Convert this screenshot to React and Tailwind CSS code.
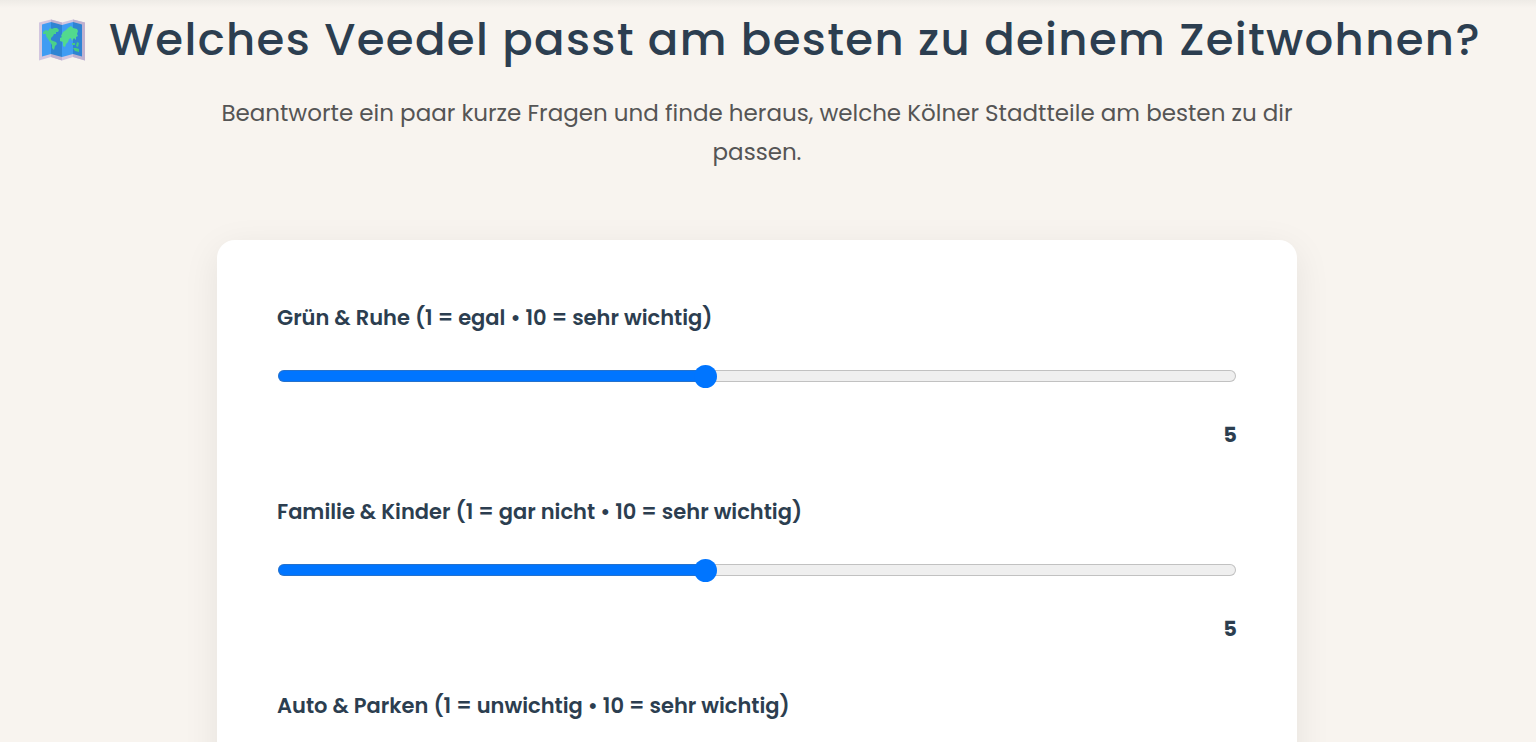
import React, { useState } from "react";

const QUESTIONS = [
  { id: "green", label: "Grün & Ruhe (1 = egal • 10 = sehr wichtig)" },
  { id: "family", label: "Familie & Kinder (1 = gar nicht • 10 = sehr wichtig)" },
  { id: "parking", label: "Auto & Parken (1 = unwichtig • 10 = sehr wichtig)" },
];

const MIN = 1;
const MAX = 10;
const THUMB = 23;

function MapIcon() {
  return (
    <svg viewBox="0 0 46 42" className="ml-1.5 w-[46px] h-[42px] shrink-0" aria-hidden="true">
      <path d="M0 3.500 12 0.500 23 3.500 34 0.500 46 3.500V41.500L34 38 23 41.500 12 38 0 41.500Z" fill="#d3c6df" />
      <path d="M12 0.500 23 3.500V41.500L12 38ZM34 0.500 46 3.500V41.500L34 38Z" fill="#bfb1d0" />
      <path d="M3 5.500 12 3V35L3 37.500Z" fill="#3f9cf3" />
      <path d="M12 3 23 6V38L12 35Z" fill="#2f84d3" />
      <path d="M23 6 34 3V35L23 38Z" fill="#3f9cf3" />
      <path d="M34 3 43 5.500V37.500L34 35Z" fill="#2f84d3" />
      <path
        d="M4 13 7 11 9 12 11 9 13 10 15 9 18 9 20 11 19 13 17 13 17 15 15 15 14 17 12 19 12 21 14 22 17 23 18 25 16 27 15 31 13 29 13 26 11 23 9 20 7 17 7 15 4 15Z"
        fill="#4bd189"
      />
      <path
        d="M22 17 24 13 27 11 29 9 32 7 34 9 38 10 39 12 38 15 39 17 37 18 37 21 35 19 33 22 32 19 30 20 29 23 27 25 26 28 24 27 24 23 21 22 21 19 23 18Z"
        fill="#52d98e"
      />
      <path d="M33 24 36 24 36 26 33 26ZM38 23 40 24 39 28 37 27ZM34 29 37 29 40 30 40 33 36 32Z" fill="#45ca83" />
    </svg>
  );
}

function SliderQuestion({ id, label }) {
  const [value, setValue] = useState(5);
  const ratio = (value - MIN) / (MAX - MIN);
  // the fill ends under the middle of the thumb
  const fill = `calc(${THUMB / 2}px + (100% - ${THUMB}px) * ${ratio})`;

  return (
    <div className="mb-11">
      <label htmlFor={id} className="block text-[21px] leading-9 font-semibold">
        {label}
      </label>
      <div className="mt-7 px-px">
        <input
          id={id}
          type="range"
          min={MIN}
          max={MAX}
          value={value}
          onChange={(e) => setValue(Number(e.target.value))}
          style={{ "--fill": fill }}
          className="block w-full h-6 appearance-none bg-transparent cursor-pointer [&::-webkit-slider-runnable-track]:box-border [&::-webkit-slider-runnable-track]:h-3 [&::-webkit-slider-runnable-track]:rounded-full [&::-webkit-slider-runnable-track]:bg-[linear-gradient(to_right,#0075ff_var(--fill),#efefef_var(--fill))] [&::-webkit-slider-runnable-track]:shadow-[inset_0_0_0_1px_rgba(110,110,110,0.35)] [&::-webkit-slider-thumb]:appearance-none [&::-webkit-slider-thumb]:size-[23px] [&::-webkit-slider-thumb]:-mt-[5px] [&::-webkit-slider-thumb]:rounded-full [&::-webkit-slider-thumb]:bg-[#0075ff]"
        />
      </div>
      <output htmlFor={id} className="block mt-8 text-right text-[21px] leading-[30px] font-bold">
        {value}
      </output>
    </div>
  );
}

export default function App() {
  return (
    <div className="h-screen overflow-x-hidden overflow-y-auto [scrollbar-width:none] bg-[#f8f4ef] font-[Poppins,Inter,sans-serif] text-[#2c3e50]">
      <div className="h-2 bg-linear-to-b from-[#eeebe6] to-[#f8f4ef]" />

      <main className="pr-[22px]">
        <header className="text-center">
          <h1 className="flex items-center justify-center gap-6 whitespace-nowrap text-[45px] leading-[64px] font-medium tracking-[0.03em]">
            <MapIcon />
            Welches Veedel passt am besten zu deinem Zeitwohnen?
          </h1>
          <p className="mx-auto mt-[22px] max-w-[1080px] text-[23px] leading-[39px] text-[#555]">
            Beantworte ein paar kurze Fragen und finde heraus, welche Kölner Stadtteile am besten zu dir passen.
          </p>
        </header>

        <form className="mx-auto mt-[68px] max-w-[1080px] rounded-[18px] bg-white p-[60px] shadow-[0_9px_36px_rgba(0,0,0,0.08)]">
          {QUESTIONS.map((q) => (
            <SliderQuestion key={q.id} id={q.id} label={q.label} />
          ))}
        </form>
      </main>
    </div>
  );
}
